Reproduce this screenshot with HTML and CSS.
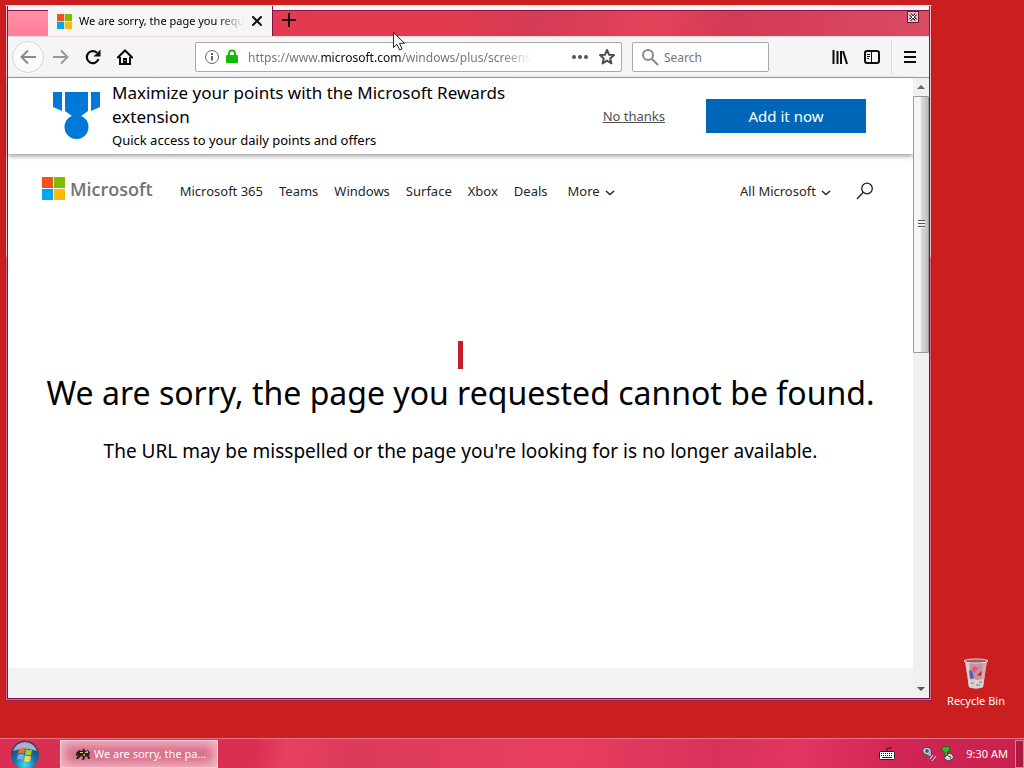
FILE: index.html
```
<!DOCTYPE html>
<html lang="en">
<head>
    <meta charset="UTF-8">
    <meta name="viewport" content="width=device-width, initial-scale=1.0">
    <title>We are sorry, the page you requested cannot be found</title>
    <link rel="stylesheet" href="styles.css">
</head>
<body>
    <main class="desktop">
        <section class="window">
            <div class="window-inner">
                <div class="titlebar">
                    <div class="tab">
                        <svg class="tab-logo" viewBox="0 0 23 23"><path fill="#f1511b" d="M0 0h11v11H0z"/><path fill="#80bb03" d="M12 0h11v11H12z"/><path fill="#01a5f0" d="M0 12h11v11H0z"/><path fill="#fbb809" d="M12 12h11v11H12z"/></svg>
                        <span class="tab-title">We are sorry, the page you requ</span>
                        <button type="button" class="icon-btn" aria-label="Close tab">
                            <svg width="12" height="12" viewBox="0 0 12 12"><path d="M2 2l8 8M10 2l-8 8" stroke="#111" stroke-width="2" stroke-linecap="round"/></svg>
                        </button>
                    </div>
                    <div class="strip">
                        <button type="button" class="icon-btn new-tab" aria-label="New tab">
                            <svg width="16" height="16" viewBox="0 0 16 16"><path d="M8 1v14M1 8h14" stroke="#1a0a10" stroke-width="2"/></svg>
                        </button>
                        <button type="button" class="icon-btn window-close" aria-label="Close window">
                            <svg width="8" height="8" viewBox="0 0 8 8"><path d="M1 1l6 6M7 1l-6 6" stroke="#444" stroke-width="3"/><path d="M1 1l6 6M7 1l-6 6" stroke="#fff" stroke-width="1"/></svg>
                        </button>
                    </div>
                </div>

                <div class="toolbar">
                    <div class="nav-buttons">
                        <button type="button" class="icon-btn back" aria-label="Back">
                            <svg width="16" height="16" viewBox="0 0 16 16" fill="none" stroke="#888" stroke-width="2"><path d="M16 8H2M8 1.500L1.500 8L8 14.500"/></svg>
                        </button>
                        <button type="button" class="icon-btn" aria-label="Forward">
                            <svg width="16" height="16" viewBox="0 0 16 16" fill="none" stroke="#999" stroke-width="2"><path d="M0 8h14M8 1.500L14.500 8L8 14.500"/></svg>
                        </button>
                        <button type="button" class="icon-btn" aria-label="Reload">
                            <svg width="16" height="16" viewBox="0 0 16 16"><path d="M13.500 10A6 6 0 1 1 12 3.800" fill="none" stroke="#0c0c0d" stroke-width="2.200"/><path d="M15.500 .5v7h-7z" fill="#0c0c0d"/></svg>
                        </button>
                        <button type="button" class="icon-btn" aria-label="Home">
                            <svg width="16" height="16" viewBox="0 0 16 16"><path d="M.8 8.500L8 1.500l7.200 7" fill="none" stroke="#0c0c0d" stroke-width="2" stroke-linecap="round"/><path d="M3 8v7h10V8" fill="none" stroke="#0c0c0d" stroke-width="2"/><path d="M6 9h4v6H6z" fill="#0c0c0d"/><path d="M7.500 11h1v1h-1z" fill="#fff"/></svg>
                        </button>
                    </div>
                    <div class="url-bar">
                        <svg width="16" height="16" viewBox="0 0 16 16" fill="none" stroke="#666"><circle cx="8" cy="8" r="6.500"/><path d="M8 7v4.500M8 4v2" stroke-width="2"/></svg>
                        <svg width="14" height="16" viewBox="0 0 14 16"><path d="M4 7V4.500a3 3 0 0 1 6 0V7" fill="none" stroke="#12bc00" stroke-width="2"/><rect x="1" y="6" width="12" height="8" rx="1" fill="#12bc00"/></svg>
                        <span class="url"><span class="url-text">https://www.<b>microsoft.com</b>/windows/plus/screens</span></span>
                        <button type="button" class="icon-btn" aria-label="Page actions">
                            <svg width="18" height="16" viewBox="0 0 18 16" fill="#555"><circle cx="3" cy="8" r="2"/><circle cx="9" cy="8" r="2"/><circle cx="15" cy="8" r="2"/></svg>
                        </button>
                        <button type="button" class="icon-btn" aria-label="Bookmark this page">
                            <svg width="16" height="16" viewBox="0 0 16 16" fill="none" stroke="#4d4d4d" stroke-width="2" stroke-linejoin="round"><path d="M8 1l2 4.700 5 .4-3.800 3.300 1.200 5L8 11.700l-4.400 2.700 1.200-5L1 6.100l5-.4z"/></svg>
                        </button>
                    </div>
                    <label class="search-bar">
                        <svg width="18" height="18" viewBox="0 0 18 18" fill="none" stroke="#888" stroke-width="2"><circle cx="7" cy="7" r="5"/><path d="M11 11l6 6"/></svg>
                        <input type="text" placeholder="Search" aria-label="Search">
                    </label>
                    <div class="tools">
                        <button type="button" class="icon-btn" aria-label="Library">
                            <svg width="16" height="16" viewBox="0 0 16 16" stroke="#0c0c0d" stroke-width="2"><path d="M1.500 1v14M5.500 2v13M9 2v13M11 2l4 13"/></svg>
                        </button>
                        <button type="button" class="icon-btn" aria-label="Sidebars">
                            <svg width="16" height="16" viewBox="0 0 16 16" fill="none" stroke="#0c0c0d"><rect x="1" y="2" width="14" height="12" rx="2" stroke-width="2"/><path d="M7.500 2v12M3 5.500h3M3 7.500h3M3 9.500h2"/></svg>
                        </button>
                    </div>
                    <button type="button" class="icon-btn menu" aria-label="Open menu">
                        <svg width="14" height="14" viewBox="0 0 14 14" stroke="#0c0c0d" stroke-width="2"><path d="M1 2h12M1 7h12M1 12h12"/></svg>
                    </button>
                </div>

                <div class="viewport">
                    <div class="page">
                        <div class="banner">
                            <svg class="medal" width="48" height="48" viewBox="0 0 48 48" fill="#0078d7"><path d="M0 0h9v19L0 15zM12 0h23v19l-7 5h-9l-7-5zM38 0h9v15l-9 4z"/><circle cx="23.500" cy="35" r="12"/></svg>
                            <div class="banner-text">
                                <p class="banner-title">Maximize your points with the Microsoft Rewards extension</p>
                                <p class="banner-sub">Quick access to your daily points and offers</p>
                            </div>
                            <a href="#" class="no-thanks">No thanks</a>
                            <button type="button" class="add-btn">Add it now</button>
                        </div>

                        <header class="site-header">
                            <a href="#" class="brand">
                                <svg width="23" height="23" viewBox="0 0 23 23"><path fill="#f1511b" d="M0 0h11v11H0z"/><path fill="#80bb03" d="M12 0h11v11H12z"/><path fill="#01a5f0" d="M0 12h11v11H0z"/><path fill="#fbb809" d="M12 12h11v11H12z"/></svg>
                                <span>Microsoft</span>
                            </a>
                            <nav class="site-nav">
                                <a href="#">Microsoft 365</a>
                                <a href="#">Teams</a>
                                <a href="#">Windows</a>
                                <a href="#">Surface</a>
                                <a href="#">Xbox</a>
                                <a href="#">Deals</a>
                                <button type="button" class="drop">More <svg width="10" height="6" viewBox="0 0 10 6"><path d="M1 1l4 3.500L9 1" fill="none" stroke="#262626" stroke-width="1.600"/></svg></button>
                            </nav>
                            <button type="button" class="drop">All Microsoft <svg width="10" height="6" viewBox="0 0 10 6"><path d="M1 1l4 3.500L9 1" fill="none" stroke="#262626" stroke-width="1.600"/></svg></button>
                            <button type="button" class="icon-btn site-search" aria-label="Search Microsoft.com">
                                <svg width="18" height="18" viewBox="0 0 18 18" fill="none" stroke="#222" stroke-width="1.300"><circle cx="11" cy="6.500" r="5.300"/><path d="M7 10.500L1 17"/></svg>
                            </button>
                        </header>

                        <div class="error">
                            <span class="error-mark"></span>
                            <h1>We are sorry, the page you requested cannot be found.</h1>
                            <p>The URL may be misspelled or the page you're looking for is no longer available.</p>
                        </div>

                        <footer class="site-footer"></footer>
                    </div>
                    <div class="scrollbar">
                        <span class="arrow up"></span>
                        <div class="track"><div class="thumb"><span class="grip"></span></div></div>
                        <span class="arrow down"></span>
                    </div>
                </div>
            </div>
        </section>

        <div class="desktop-icon">
            <svg width="26" height="32" viewBox="0 0 26 32">
                <path d="M2 3l4 26q7 3 14 0l4-26z" fill="#c9919a"/>
                <path d="M2 3l4 26 3 1L6 4z" fill="#e6c9cd"/>
                <path d="M20 4l-3 26 3-1 4-26z" fill="#dba9ae"/>
                <path d="M6 12l3 1 2 7-4 1z" fill="#4a5fc0"/>
                <path d="M10 8l5 2-3 5-3-3z" fill="#d85c78"/>
                <path d="M19 13l-5 4 4 1z" fill="#c52936"/>
                <path d="M5 23l5-2 4 1 7-1-1 8q-7 3-14 0z" fill="#d5d3cb"/>
                <path d="M8 25h3M13 27h4M16 24h3" stroke="#777"/>
                <ellipse cx="13" cy="3" rx="12" ry="2" fill="#8c6268" stroke="#e4dcdc"/>
            </svg>
            <span>Recycle Bin</span>
        </div>

        <svg class="cursor" width="12" height="19" viewBox="0 0 12 19"><path d="M.5 .5v15l3.500-3.300 2.600 5.800 2.500-1.100-2.600-5.600h5z" fill="#fff" stroke="#222"/></svg>
    </main>

    <footer class="taskbar">
        <button type="button" class="start" aria-label="Start">
            <svg width="30" height="28" viewBox="0 0 30 28">
                <defs><radialGradient id="orb" cx=".5" cy=".85" r=".8"><stop offset="0" stop-color="#3fe0f0"/><stop offset=".5" stop-color="#1b6fa5"/><stop offset="1" stop-color="#253c66"/></radialGradient></defs>
                <circle cx="15" cy="15" r="14" fill="url(#orb)"/>
                <path d="M3 11a12.500 12.500 0 0 1 24 0q-12-5-24 0z" fill="#c5cede" opacity=".8"/>
                <path d="M9 9q3-2 6 0l-1 5q-3-2-6 0z" fill="#f26b2c"/>
                <path d="M16 9q3 2 6 0l-1 6q-3 1-6-1z" fill="#9bcf3a"/>
                <path d="M8 15q3-2 6 0l-1 5q-3-2-6 0z" fill="#68b5ef"/>
                <path d="M15 15q3 2 6 1l-1 5q-3 2-6 0z" fill="#fbd648"/>
            </svg>
        </button>
        <button type="button" class="task">
            <svg width="16" height="16" viewBox="0 0 16 16"><path d="M1 7l3-3 3 1 2-3 1 3 3-1 2 3-1 2 1 4h-2l-1-3-2 1-1 3H7l1-3-2-1-3 3H1l2-4-2 1z" fill="#2b211a"/><path d="M5 6h3v1H5zM10 6l3-1v2h-3zM7 9l3-1v2z" fill="#e0c08a"/></svg>
            <span>We are sorry, the pa...</span>
        </button>
        <div class="tray">
            <svg width="16" height="13" viewBox="0 0 16 13"><path d="M8 4V1h5" fill="none" stroke="#222"/><rect x=".5" y="4.500" width="15" height="8" rx="1" fill="#fff" stroke="#222"/><path d="M2 6.500h12M2 8.500h12" stroke="#222" stroke-width="1.200" stroke-dasharray="1 1"/><path d="M3 10.500h10" stroke="#222"/></svg>
            <svg class="tray-sound" width="16" height="16" viewBox="0 0 16 16"><path d="M1 4q5-5 9-1l1 7-2 1-3-2-3-1z" fill="#a6adb8" stroke="#46444e"/><circle cx="6" cy="5" r="2.500" fill="#4c5669" stroke="#e4e6ea"/><path d="M9 13l3-4M11 15l4-5" stroke="#e4dfe4"/></svg>
            <svg width="14" height="16" viewBox="0 0 14 16"><path d="M6 7l5 1 2 4-5 3-5-2z" fill="#d8d9da" stroke="#444"/><path d="M7 10l3 1-1 2" fill="none" stroke="#555"/><path d="M1 1l7-1 1 5-3 1 1 3-3 1-1-4-2-1z" fill="#3cad35" stroke="#285c20"/></svg>
            <time>9:30 AM</time>
        </div>
        <button type="button" class="show-desktop" aria-label="Show desktop"></button>
    </footer>
</body>
</html>
```
FILE: styles.css
```
/* General Reset */
* {
    margin: 0;
    padding: 0;
    box-sizing: border-box;
}

body {
    height: 100vh;
    display: flex;
    flex-direction: column;
    overflow: hidden;
    background: #cb1e1e;
    color: #000;
    font-family: "Noto Sans", "Open Sans", sans-serif;
    font-size: 12px;
}

button {
    border: none;
    background: transparent;
    color: inherit;
    font: inherit;
    cursor: pointer;
}

a {
    color: inherit;
    text-decoration: none;
}

svg {
    display: block;
    flex-shrink: 0;
}

.icon-btn {
    display: flex;
    align-items: center;
    justify-content: center;
    flex-shrink: 0;
}

/* Desktop */
.desktop {
    flex: 1;
    position: relative;
}

.window {
    position: absolute;
    inset: 5px 92px 37px 5px;
    border: 1px solid #96204e;
    border-top-color: #fbd9dc;
    padding: 0 1px 1px;
    background: linear-gradient(#f5c3d0 250px, #d8688c 252px);
}

.window-inner {
    height: 100%;
    display: flex;
    flex-direction: column;
    border: 1px solid #7d1245;
    border-top: none;
}

.desktop-icon {
    position: absolute;
    right: 12px;
    bottom: 29px;
    width: 72px;
    display: flex;
    flex-direction: column;
    align-items: center;
    gap: 3px;
    color: #fff;
    font-size: 11px;
    line-height: 16px;
    white-space: nowrap;
}

.cursor {
    position: absolute;
    left: 393px;
    top: 32px;
}

/* Tab strip */
.titlebar {
    display: flex;
    height: 31px;
    padding-left: 40px;
    background: linear-gradient(#fff3f4 4px, #80164a 4px, #80164a 5px, #ff8fa6 5px, #ff7e98);
    border-bottom: 1px solid #f3d5da;
}

.tab {
    width: 224px;
    display: flex;
    align-items: center;
    gap: 7px;
    padding: 0 11px 0 9px;
    background: #f6f6f7;
}

.tab-logo {
    width: 15px;
    height: 15px;
}

.tab-title {
    flex: 1;
    white-space: nowrap;
    font-size: 11px;
    line-height: 16px;
    -webkit-mask-image: linear-gradient(to right, #000 84%, transparent);
    mask-image: linear-gradient(to right, #000 84%, transparent);
}

.strip {
    flex: 1;
    display: flex;
    justify-content: space-between;
    align-items: flex-start;
    padding: 5px 10px 0 8px;
    border-left: 1px solid #7d1245;
    background:
        linear-gradient(#fff3f4 4px, #80164a 4px, #80164a 5px, transparent 5px),
        linear-gradient(100deg, #e23b50 28%, #d43b55 40%, #e5425a 58%, #d33a55 70%, #dc4a63);
}

.new-tab {
    margin-top: 1px;
}

.window-close {
    width: 12px;
    height: 12px;
    border: 1px solid #6e1838;
    background: #eec5cc;
}

/* Toolbar */
.toolbar {
    height: 41px;
    display: flex;
    align-items: center;
    padding: 0 1px 0 4px;
    background: #f5f5f6;
    border-bottom: 1px solid #9c9c9e;
}

.nav-buttons {
    display: flex;
    align-items: center;
    gap: 16px;
    margin-right: 62px;
}

.back {
    width: 32px;
    height: 32px;
    margin-right: -7px;
    border: 1px solid #d5d5d6;
    border-radius: 50%;
    background: #fafafa;
}

.url-bar,
.search-bar {
    height: 30px;
    display: flex;
    align-items: center;
    border: 1px solid #a9a9aa;
    border-radius: 2px;
    background: #fff;
}

.url-bar {
    flex: 1;
    min-width: 0;
    gap: 5px;
    padding: 0 6px 0 8px;
}

.url-bar .icon-btn {
    margin-left: 5px;
}

.url {
    flex: 1;
    margin-left: 4px;
    white-space: nowrap;
    color: #777;
}

.url-text {
    -webkit-mask-image: linear-gradient(to right, #000 90%, transparent);
    mask-image: linear-gradient(to right, #000 90%, transparent);
}

.url b {
    color: #0c0c0d;
    font-weight: normal;
}

.search-bar {
    width: 137px;
    gap: 5px;
    margin: 0 63px 0 10px;
    padding: 0 8px;
}

.search-bar input {
    width: 100%;
    min-width: 0;
    border: none;
    outline: none;
    background: transparent;
    font: inherit;
}

.search-bar input::placeholder {
    color: #757575;
}

.tools {
    height: 34px;
    display: flex;
    gap: 16px;
    padding-right: 11px;
    border-right: 1px solid #ddd;
}

.menu {
    width: 36px;
    height: 32px;
}

/* Web page */
.viewport {
    flex: 1;
    display: flex;
    min-height: 0;
}

.page {
    flex: 1;
    display: flex;
    flex-direction: column;
    min-width: 0;
    background: #fff;
}

.banner {
    display: flex;
    align-items: center;
    padding: 3px 47px 3px 45px;
    box-shadow: 0 2px 5px rgba(0, 0, 0, 0.4);
}

.banner-text {
    flex: 1;
    margin: 0 72px 0 11px;
}

.banner-title {
    font-size: 17px;
    line-height: 24px;
}

.banner-sub {
    font-size: 13px;
    line-height: 22px;
}

.no-thanks {
    margin-right: 41px;
    color: #505050;
    font-size: 13px;
    text-decoration: underline;
}

.add-btn {
    width: 160px;
    height: 34px;
    background: #0067b8;
    color: #fff;
    font-size: 15px;
}

.site-header {
    height: 73px;
    display: flex;
    align-items: center;
    padding: 0 39px 0 34px;
    color: #262626;
    font-size: 13px;
}

.brand {
    display: flex;
    align-items: center;
    gap: 5px;
    margin: 0 27px 4px 0;
    color: #737373;
    font-family: "Open Sans", sans-serif;
    font-size: 18px;
    font-weight: 600;
    line-height: 24px;
}

.site-nav {
    flex: 1;
    display: flex;
    gap: 16px;
    white-space: nowrap;
}

.site-nav .drop {
    margin-left: 4px;
}

.drop {
    display: flex;
    align-items: center;
    gap: 5px;
    white-space: nowrap;
}

.drop svg {
    margin-top: 4px;
}

.site-search {
    margin-left: 25px;
}

.error {
    flex: 1;
    padding-top: 114px;
    text-align: center;
}

.error-mark {
    display: block;
    width: 5px;
    height: 28px;
    margin: 0 auto;
    background: #c1202b;
}

.error h1 {
    font-size: 32px;
    font-weight: normal;
    line-height: 48px;
    white-space: nowrap;
}

.error p {
    margin-top: 20px;
    font-size: 19px;
    line-height: 28px;
}

.site-footer {
    height: 30px;
    background: #f2f2f2;
}

/* Scrollbar */
.scrollbar {
    width: 16px;
    display: flex;
    flex-direction: column;
    align-items: center;
    background: #f0f0f0;
}

.track {
    flex: 1;
    width: 100%;
}

.arrow {
    height: 18px;
    display: flex;
    align-items: center;
}

.arrow::before {
    content: "";
    border: 4px solid transparent;
}

.up::before {
    border-top: none;
    border-bottom-color: #666;
}

.down::before {
    border-bottom: none;
    border-top-color: #555;
}

.thumb {
    height: 44%;
    display: flex;
    align-items: center;
    justify-content: center;
    border: 1px solid #999;
    border-radius: 1px;
    background: linear-gradient(to right, #f5f5f5 45%, #d9d9da 55%, #bebebf);
}

.grip {
    width: 7px;
    height: 8px;
    background: repeating-linear-gradient(#555 0 1px, #f0f0f0 1px 3px);
}

/* Taskbar */
.taskbar {
    height: 30px;
    display: flex;
    align-items: center;
    border-top: 1px solid #e97588;
    background: linear-gradient(100deg, #d92f53 25%, #e84060 28%, #dd3b5b 34%, #e83e5f 55%, #d8325b 70%, #e33561 78%, #d02555 88%, #c9204f);
    color: #fff;
    font-size: 11px;
}

.start {
    margin: 0 20px 0 10px;
}

.task {
    width: 158px;
    height: 28px;
    display: flex;
    align-items: center;
    gap: 3px;
    padding: 0 8px 0 14px;
    border: 1px solid #f7d3d9;
    background: #d96a87;
    box-shadow: inset 0 0 11px 4px #f2bac5;
    white-space: nowrap;
}

.tray {
    display: flex;
    align-items: center;
    gap: 4px;
    margin-left: auto;
}

.tray-sound {
    margin-left: 22px;
}

.tray time {
    margin: 0 7px;
}

.show-desktop {
    width: 9px;
    height: 28px;
    border: 1px solid #e87b99;
    background: #a61d45;
}
```
